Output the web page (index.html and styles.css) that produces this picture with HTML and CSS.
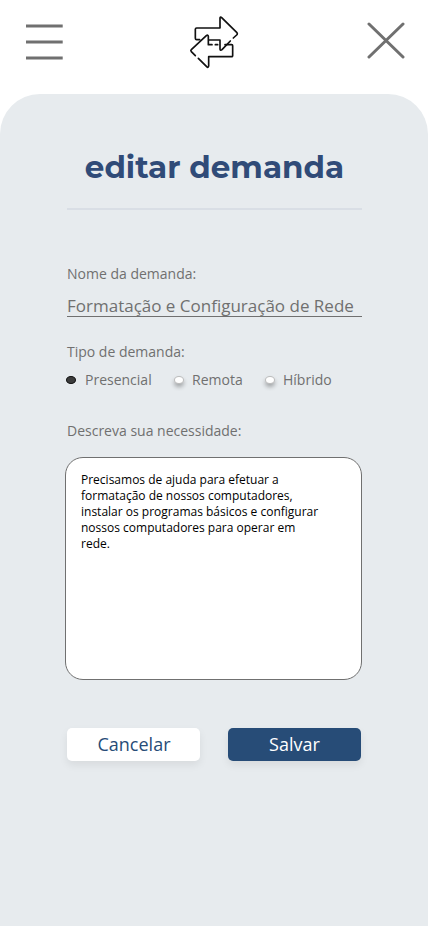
FILE: index.html
```html
<!DOCTYPE html>
<html lang="pt-BR">
<head>
<meta charset="utf-8">
<title>Editar demanda</title>
<link rel="stylesheet" href="styles.css">
</head>
<body>
<header class="topbar">
  <svg class="menu" viewBox="0 0 37 36" fill="none" stroke="#707070" stroke-width="3"><path d="M0 2H36.7M0 18H36.7M0 34H36.7"/></svg>
  <svg class="logo" viewBox="0 0 210 210" fill="none" stroke="#111" stroke-width="5" stroke-linecap="round" stroke-linejoin="round">
    <path d="M59 95H50Q46 95 46 91V64Q46 60 50 60H120V30Q121 25 125 29L170 73Q174 77 170 81L160 90M151 99L126 125Q121 129 120 123V96H88"/>
    <path d="M46 143L34 131Q31 128 34 125L79 83Q84 79 85 85V110H96M106 110H113M135 110H155Q158 110 158 113V143Q158 146 155 146H86V174Q85 181 80 176L55 151"/>
  </svg>
  <svg class="close" viewBox="0 0 38 38" fill="none" stroke="#707070" stroke-width="3" stroke-linecap="round"><path d="M2 2L36 35M36 2L2 35"/></svg>
</header>
<main class="panel">
  <h1 class="title">editar demanda</h1>
  <form class="form">
    <label class="label" for="nome">Nome da demanda:</label>
    <div class="field" id="nome">Formatação e Configuração de Rede</div>
    <div class="label label-type">Tipo de demanda:</div>
    <div class="options">
      <div class="option"><span class="radio radio-on"></span>Presencial</div>
      <div class="option"><span class="radio"></span>Remota</div>
      <div class="option"><span class="radio"></span>Híbrido</div>
    </div>
    <div class="label label-desc">Descreva sua necessidade:</div>
    <div class="description">Precisamos de ajuda para efetuar a<br>formatação de nossos computadores,<br>instalar os programas básicos e configurar<br>nossos computadores para operar em<br>rede.</div>
    <div class="actions">
      <button type="button" class="btn">Cancelar</button>
      <button type="button" class="btn btn-primary">Salvar</button>
    </div>
  </form>
</main>
</body>
</html>
```
FILE: styles.css
```css
* { box-sizing: border-box; }
body {
  margin: 0;
  min-height: 926px;
  display: flex;
  flex-direction: column;
  background: #fff;
  color: #707070;
  font-family: "Open Sans", sans-serif;
}
.topbar {
  height: 94px;
  padding: 8px 23.5px 0 26px;
  display: flex;
  align-items: flex-start;
}
.menu { width: 37px; height: 36px; margin-top: 16px; }
.logo { width: 70px; height: 70px; margin-left: 117px; }
.close { width: 38px; height: 38px; margin: 13.5px 0 0 auto; }
.panel {
  flex: 1;
  padding: 49px 66px 0 67px;
  background: #e7ebee;
  border-radius: 40px 40px 0 0;
}
.title {
  margin: 0;
  height: 67px;
  border-bottom: 2px solid #d9dee5;
  color: #304b78;
  font: 700 31px/49px Montserrat, Inter, sans-serif;
  text-align: center;
  white-space: nowrap;
}
.form { padding-top: 54px; }
.label { display: block; font-size: 14px; line-height: 20px; }
.field {
  height: 33px;
  border-bottom: 1px solid #707070;
  font-size: 17px;
  line-height: 24px;
  padding-top: 10px;
  white-space: nowrap;
}
.label-type { margin-top: 25px; }
.options { display: flex; margin-top: 8px; }
.option {
  display: flex;
  align-items: center;
  font-size: 14px;
  line-height: 20px;
}
.option:nth-child(1) { width: 108px; margin-left: -1px; }
.option:nth-child(2) { width: 91px; }
.radio {
  width: 10px;
  height: 8px;
  margin: 0 8px 1px 0;
  border: 1px solid #bbb;
  border-radius: 50%;
  background: #fff;
  box-shadow: 0 3px 4px rgba(0, 0, 0, .3);
}
.radio-on { margin-right: 9px; background: #3c3c3c; border-color: #111; box-shadow: none; }
.label-desc { margin-top: 31px; }
.description {
  height: 223px;
  margin: 16px 0 0 -2px;
  padding: 14px 15px;
  border: 1px solid #707070;
  border-radius: 18px;
  background: #fff;
  color: #000;
  font-size: 12px;
  line-height: 16px;
  white-space: nowrap;
}
.actions { display: flex; justify-content: space-between; margin: 48px 1px 0 0; }
.btn {
  width: 133px;
  height: 33px;
  padding: 0 0 0 1px;
  border: 0;
  border-radius: 5px;
  background: #fff;
  color: #274c77;
  font: 18px/33px "Open Sans", sans-serif;
  box-shadow: 0 4px 8px rgba(0, 0, 0, .07);
}
.btn-primary { padding: 0; background: #274c77; color: #fff; }
```
